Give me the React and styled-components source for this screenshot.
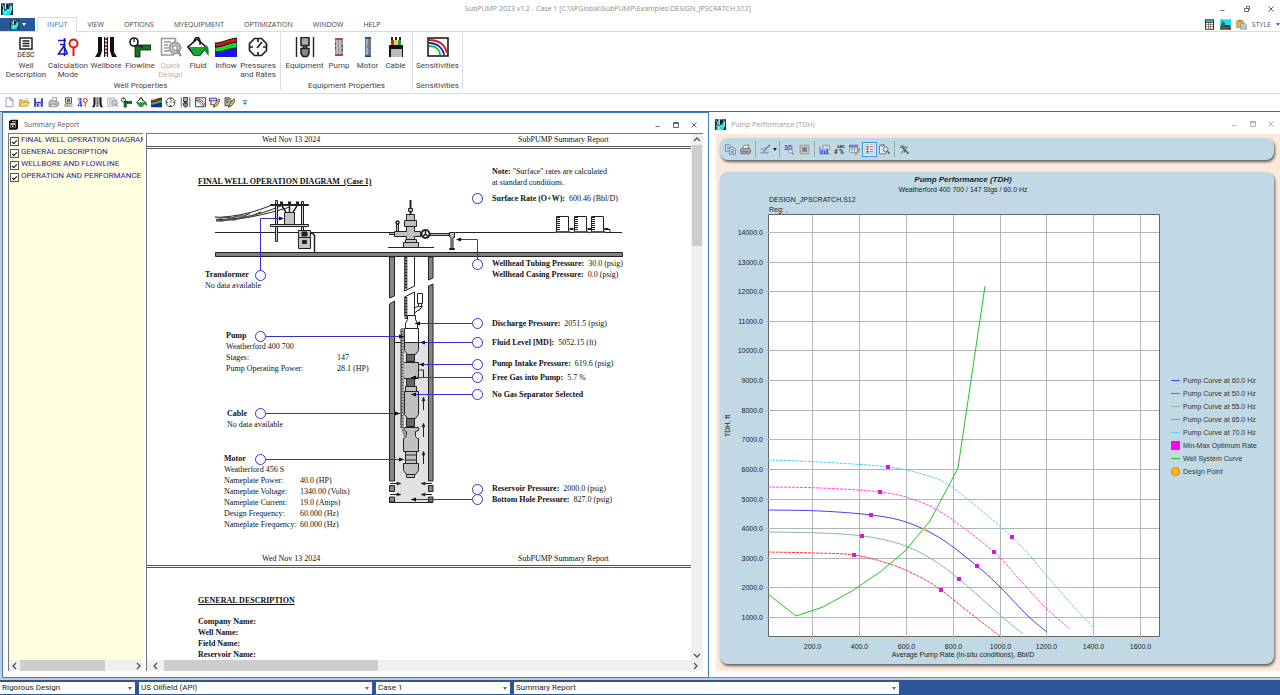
import React from "react";
import styled, { createGlobalStyle, css } from "styled-components";

const UI = `Roboto, "Noto Sans", sans-serif`;
const CAPTION = `"Open Sans", "Noto Sans", sans-serif`;
const SERIF = `"Liberation Serif", "Times New Roman", serif`;
const SANS = `"Liberation Sans", Arial, sans-serif`;
const BLUE = "#2b579a";

const GlobalStyle = createGlobalStyle`
  *, *::before, *::after { box-sizing: border-box; }
  body { margin: 0; font-family: ${UI}; font-size: 8px; line-height: 9px; color: #444; background: #fff; }
  button, input, select { font: inherit; color: inherit; margin: 0; }
  button { border: 0; padding: 0; background: none; cursor: pointer; }
  svg { display: block; }
  ul { list-style: none; margin: 0; padding: 0; }
`;

/* ---------- frame ---------- */

const Shell = styled.div`
  display: flex;
  flex-direction: column;
  height: 100vh;
  min-width: 960px;
  overflow: hidden;
`;

const AppTitle = styled.header`
  display: grid;
  grid-template-columns: 12px 1fr 72px;
  align-items: center;
  flex: none;
  height: 17px;
  padding: 0 5px 0 1px;
`;

const AppName = styled.h1`
  margin: 0;
  font-family: ${CAPTION};
  font-size: 7px;
  font-weight: 400;
  text-align: center;
  color: #8c8c8c;
`;

const Controls = styled.div`
  display: flex;
  align-items: center;
  justify-content: flex-end;
  gap: ${(p) => p.$gap}px;
  color: ${(p) => (p.$dim ? "#b0b0b0" : "#666")};
  button { width: 8px; height: 8px; }
`;

const Svg = styled.svg`
  width: ${(p) => p.$w}px;
  height: ${(p) => p.$h}px;
  flex: none;
`;

const TabRow = styled.nav`
  display: flex;
  flex: none;
  height: 15px;
  border-bottom: 1px solid #dcdcdc;
  background: #fff;
  font-family: ${CAPTION};
  font-size: 7px;
`;

const FileButton = styled.button`
  display: flex;
  align-items: center;
  justify-content: center;
  gap: 3px;
  width: 35px;
  margin: 1px 2px 0 0;
  background: ${BLUE};
`;

const Tab = styled.button`
  height: 15px;
  padding: 0 10px;
  color: #444;
  ${(p) =>
    p.$active &&
    css`
      border: 1px solid #dcdcdc;
      border-bottom-color: #fff;
      padding: 0 9px;
      background: #fff;
      color: #2a72c8;
    `}
`;

const TabTools = styled.div`
  display: flex;
  align-items: center;
  gap: 5px;
  margin-left: auto;
  color: #555;
  button { flex: none; }
`;

const Ribbon = styled.div`
  display: flex;
  flex: none;
  height: 62px;
  border-bottom: 1px solid #dcdcdc;
  padding-left: 1px;
`;

const Group = styled.section`
  display: flex;
  flex-direction: column;
  justify-content: space-between;
  margin: 1px 0 3px;
  padding: 4px ${(p) => p.$pad}px 0;
  border-right: 1px solid #dcdcdc;
`;

const GroupTools = styled.div`
  display: flex;
`;

const GroupName = styled.h2`
  margin: 0;
  font-size: 8px;
  font-weight: 400;
  text-align: center;
`;

const ToolButton = styled.button`
  display: flex;
  flex-direction: column;
  align-items: center;
  gap: 3px;
  width: ${(p) => p.$w}px;
  line-height: 9px;
  white-space: pre;
  color: ${(p) => (p.disabled ? "#b4b4b4" : "#444")};
`;

const QuickBar = styled.div`
  display: flex;
  align-items: center;
  flex: none;
  height: 17px;
  padding-left: 4px;
  gap: 6px;
`;

const QuickIcons = styled.div`
  display: flex;
  justify-content: space-between;
  width: 231px;
`;

const Desktop = styled.main`
  display: grid;
  grid-template-columns: minmax(0, 707fr) minmax(0, 571fr);
  flex: 1 1 0;
  min-height: 0;
  padding: 0 0 2px 2px;
  border-top: 1px solid #5f6368;
  background: #c9ccd0;
`;

const Window = styled.section`
  display: flex;
  flex-direction: column;
  min-height: 0;
  background: #fff;
  border: 1px solid #3d7cc4;
  ${(p) =>
    p.$inactive &&
    css`
      border: 0;
      border-bottom: 1px solid #8a8a8a;
    `}
`;

const WindowTitle = styled.header`
  display: flex;
  align-items: center;
  flex: none;
  height: ${(p) => (p.$dim ? 22 : 20)}px;
  padding: ${(p) => (p.$dim ? "2px 5px 0 6px" : "3px 10px 0 5px")};
  gap: 5px;
  color: ${(p) => (p.$dim ? "#9c9c9c" : "#555")};
  h2 { margin: 0; flex: 1; font-family: ${CAPTION}; font-size: 7px; font-weight: 400; }
`;

/* ---------- scroll bars ---------- */

const HBar = styled.div`
  display: flex;
  align-items: center;
  flex: none;
  height: 11px;
  background: #f0f0f0;
  button { display: flex; justify-content: center; width: ${(p) => p.$end}px; flex: none; }
`;

const HTrack = styled.div`
  flex: 1;
  height: 11px;
`;

const HThumb = styled.div`
  width: ${(p) => p.$size}%;
  height: 100%;
  background: #cdcdcd;
`;

const VBar = styled.div`
  display: flex;
  flex-direction: column;
  align-items: center;
  flex: none;
  width: 12px;
  background: #f0f0f0;
  button { display: flex; align-items: center; justify-content: center; height: 11px; flex: none; }
`;

const VTrack = styled.div`
  flex: 1;
  width: 10px;
`;

const VThumb = styled.div`
  height: 20%;
  background: #cdcdcd;
`;

/* ---------- summary report ---------- */

const ReportBody = styled.div`
  display: flex;
  flex: 1;
  min-height: 0;
  gap: 3px;
  margin: 0 5px 6px;
`;

const Outline = styled.aside`
  display: flex;
  flex-direction: column;
  justify-content: space-between;
  flex: none;
  width: 135px;
  border-top: 1px solid #777;
  border-left: 1px solid #777;
  background: #ffffdf;
  overflow: hidden;
`;

const OutlineItem = styled.label`
  display: flex;
  align-items: flex-start;
  gap: 2px;
  height: 12px;
  padding: 1px 0 0 1px;
  white-space: nowrap;
  color: #2a22b4;
`;

const Check = styled.input.attrs({ type: "checkbox" })`
  appearance: none;
  flex: none;
  width: 9px;
  height: 9px;
  margin-top: 2px;
  border: 1px solid #555;
  background: #fff;
  display: grid;
  place-items: center;
  &:checked::before {
    content: "";
    width: 5px;
    height: 3px;
    border-left: 1px solid #111;
    border-bottom: 1px solid #111;
    transform: rotate(-45deg);
  }
`;

const ReportPane = styled.div`
  display: flex;
  flex-direction: column;
  flex: 1;
  min-width: 0;
  border-top: 1px solid #777;
  border-left: 1px solid #777;
`;

const ReportView = styled.div`
  display: flex;
  flex: 1;
  min-height: 0;
`;

const Page = styled.article`
  flex: 1;
  min-width: 0;
  overflow: hidden;
  font-family: ${SERIF};
  line-height: 11px;
  color: #111;
`;

const PageRule = styled.div`
  display: grid;
  grid-template-columns: 256px 1fr;
  height: 15px;
  padding-left: 115px;
  line-height: 11px;
  border-bottom: 3px double #555;
`;

const PageTitle = styled.h3`
  margin: 0;
  font-size: 8px;
  font-weight: 700;
  text-decoration: underline;
  white-space: pre;
`;

const Canvas = styled.div`
  position: relative;
  width: 544px;
  height: 404px;
`;

const Note = styled.div`
  position: absolute;
  left: ${(p) => p.$x}px;
  top: ${(p) => p.$y}px;
  white-space: nowrap;
  span { margin-left: 4px; }
`;

const Specs = styled.table`
  border-collapse: collapse;
  th, td { padding: 0; font-weight: 400; text-align: left; line-height: 11px; }
  th { width: ${(p) => p.$label}px; }
`;

const General = styled.div`
  padding: 27px 51px;
  p { margin: 0; font-weight: 700; }
  h3 { margin-bottom: 10px; }
`;

/* ---------- pump performance ---------- */

const ChartBody = styled.div`
  display: flex;
  flex-direction: column;
  flex: 1;
  min-height: 0;
  gap: 12px;
  margin: 0 0 6px 7px;
  padding: 4px 6px 7px 4px;
  background: #fde9dc;
`;

const Card = styled.div`
  display: flex;
  align-items: ${(p) => (p.$bar ? "center" : "flex-start")};
  flex: ${(p) => (p.$bar ? "none" : "1")};
  min-height: 22px;
  padding-left: ${(p) => (p.$bar ? 3 : 0)}px;
  border-radius: 8px;
  background: #c1d9e5;
  box-shadow: 1px 2px 3px #5c5c5c;
`;

const CardTool = styled.button`
  display: flex;
  align-items: center;
  justify-content: center;
  width: 15px;
  height: 15px;
  ${(p) => p.$on && css`border: 1px solid #3a94e0; background: #d8ecfa;`}
`;

const Divider = styled.span`
  width: 1px;
  height: 16px;
  margin: 0 2px;
  background: #93a8b4;
`;

const Plot = styled.svg`
  flex: 1;
  min-width: 0;
  height: auto;
  max-height: 100%;
  font-family: ${SANS};
  font-size: 7px;
  fill: #222;
`;

const Legend = styled.ul`
  flex: none;
  width: 109px;
  margin-top: 202px;
  padding-left: 6px;
  font-family: ${SANS};
  font-size: 7px;
  color: #333;
  li { display: flex; align-items: center; gap: 2px; height: 13px; line-height: 13px; white-space: nowrap; }
`;

/* ---------- status bar ---------- */

const StatusBar = styled.footer`
  display: flex;
  align-items: center;
  flex: none;
  gap: 4px;
  height: 15px;
  background: ${BLUE};
`;

const Picker = styled.label`
  position: relative;
  flex: 0 1 ${(p) => p.$w}px;
  select {
    appearance: none;
    display: block;
    width: 100%;
    height: 12px;
    padding: 0 12px 0 2px;
    border: 0;
    border-radius: 0;
    background: #fff;
    color: #222;
  }
  svg { position: absolute; right: 3px; top: 5px; pointer-events: none; }
`;

/* ---------- icons ---------- */

const I = {
  app: (
    <g>
      <path d="M0 0h22v22H0z" fill="#062a2c" />
      <path d="M3 22V12l4 3V0h3v9l4 3 2-8 3 2v10l-3 6z" fill="#16e4ec" />
      <path d="M2 2l3 5-1 8M17 2l3 4-2 9M8 0v20M13 0v14" stroke="#fff" strokeWidth="1.6" fill="none" />
      <path d="M10 2h4v9h-4z" fill="#111" />
      <path d="M5 10l3 3 2-3" stroke="#0a7a50" strokeWidth="2" fill="none" />
    </g>
  ),
  desc: (
    <g>
      <path d="M5 1h12v11H5zM7.500 4h7M7.500 6.500h7M7.500 9h7" fill="none" stroke="#222" strokeWidth="1.500" />
      <text x="11" y="20" textAnchor="middle" fontFamily="Roboto, sans-serif" fontSize="7" fill="#222">DESC</text>
    </g>
  ),
  calc: (
    <g fill="none" strokeWidth="1.600">
      <path d="M1 3.500h8M7.500 1v18M8 7.500L1.500 17h9M3 7.500h4M7.500 10l3 7" stroke="#1418cc" />
      <circle cx="16.500" cy="6.500" r="4" stroke="#e01818" strokeWidth="2" />
      <path d="M16.500 10.500V19" stroke="#e01818" strokeWidth="2" />
    </g>
  ),
  wellbore: (
    <g>
      <path d="M3 0h4v14l-2 6H0l3-5zM19 0h-4v14l2 6h5l-3-5z" fill="#111" />
      <path d="M9.500 0v20M12.500 0v20" stroke="#111" strokeWidth="1" />
      <path d="M11 1v18" stroke="#c02020" strokeWidth="2" strokeDasharray="2 1.500" />
    </g>
  ),
  flow: (
    <g>
      <path d="M6 8h16v5H11v7H6z" fill="#0a7a1c" stroke="#111" strokeWidth=".8" />
      <circle cx="5" cy="5" r="4" fill="#fff" stroke="#111" strokeWidth="1.600" />
      <path d="M5 5V2M8 9h5v2" stroke="#111" strokeWidth="1.200" fill="none" />
    </g>
  ),
  quick: (
    <g fill="none" stroke="#999" strokeWidth="1.500">
      <path d="M14 18H1.500V1.500h14V5M4 5h7M4 8h4M4 11h4M4 14h5" />
      <circle cx="15" cy="11" r="5.500" fill="#d8d8d8" strokeWidth="2" />
      <circle cx="15" cy="11" r="2.500" fill="#fff" />
      <path d="M17 13l4 6" strokeWidth="2.500" />
    </g>
  ),
  fluid: (
    <g>
      <path d="M10 2l9 8-6 8H7l-6-8z" fill="#fff" stroke="#111" strokeWidth="1.600" />
      <path d="M2 10h17l-6 8H7z" fill="#18a832" />
      <path d="M18 8c4 1 4 5 3.500 11L17 13z" fill="#0c8a22" />
      <path d="M7 5c0-6 6-6 6 0v3" fill="none" stroke="#111" strokeWidth="1.400" />
    </g>
  ),
  inflow: (
    <g>
      <path d="M0 15c8 0 12-4 22-4v9H0z" fill="#1818e0" />
      <path d="M0 10c8 0 12-4 22-5v6c-9 0-13 4-22 4z" fill="#14d82c" stroke="#111" strokeWidth=".8" />
      <path d="M0 6c8 0 12-4 22-5v4C12 6 8 10 0 10z" fill="#d81818" stroke="#111" strokeWidth="1" />
    </g>
  ),
  gauge: (
    <g fill="none" stroke="#222" strokeWidth="1.700">
      <path d="M7.500 1.500h7l5 5v7l-5 5h-7l-5-5v-7z" />
      <path d="M11 2v3M11 15v3M3 10h3M16 10h3M10 11l5-6" />
    </g>
  ),
  equip: (
    <g stroke="#222">
      <path d="M2.500 0v20M19.500 0v20" strokeWidth="1.400" />
      <path d="M7 .5h8v8H7z" fill="#aaa" strokeWidth="1.600" />
      <path d="M9 8.500h4v3H9z" fill="#555" />
      <path d="M7 11.500h8v5l-2 3H9l-2-3z" fill="#888" strokeWidth="1.600" />
    </g>
  ),
  pump: (
    <g>
      <path d="M7 1h8v18H7z" fill="#999" />
      <path d="M9 3v14M12 3v14" stroke="#ddd" />
      <path d="M7 1h8v2H7zM7 17h8v2H7z" fill="#a05050" />
      <path d="M7 7h1M7 11h1M14 9h1M14 13h1" stroke="#444" strokeWidth="2" />
    </g>
  ),
  motor: (
    <g>
      <path d="M8 0h6v20H8z" fill="#4a83b8" />
      <path d="M10 2v16" stroke="#9cc6e8" strokeWidth="1.500" />
      <path d="M12 3v3M11 8v3M12 13v3" stroke="#c86a1e" strokeWidth="2" />
      <path d="M8 0h6v1.500H8zM8 18.500h6V20H8z" fill="#2c4258" />
    </g>
  ),
  cable: (
    <g>
      <path d="M6 0h2v4H6zM10 0h2v4h-2zM14 0h2v4h-2z" fill="#222" />
      <path d="M6 3h3v6H6z" fill="#d82020" />
      <path d="M9.500 3h3v6h-3z" fill="#e8c820" />
      <path d="M13 3h3v6h-3z" fill="#20a040" />
      <path d="M4 8h14v12H4z" fill="#111" />
      <path d="M6 12h11v8H6z" fill="#bbb" />
    </g>
  ),
  sens: (
    <g fill="none" strokeWidth="1.800">
      <path d="M1 1h20v18H1z" stroke="#111" fill="#fff" strokeWidth="1.500" />
      <path d="M2 3c10 0 16 5 18 13" stroke="#e01818" />
      <path d="M2 6c8 0 14 5 15 12" stroke="#1818e0" />
      <path d="M2 9c7 0 11 4 11 9" stroke="#18c828" />
    </g>
  ),
  fresh: <path d="M4 1h9l5 5v13H4zM13 1v5h5" fill="#fff" stroke="#7488a8" strokeWidth="1.600" />,
  open: (
    <g stroke="#a87c18" strokeWidth="1.200">
      <path d="M1 18V5h6l2 2h8v3" fill="#f4d060" />
      <path d="M1 18l4-8h16l-4 8z" fill="#f8d870" />
      <path d="M13 3c3-2 5 0 6 2" fill="none" stroke="#4870b0" />
    </g>
  ),
  save: (
    <g>
      <path d="M2 2h18v17H2z" fill="#4a50b8" />
      <path d="M6 2h10v7H6z" fill="#fff" />
      <path d="M6 12h10v7H6z" fill="#c8cce8" />
      <path d="M8 13h3v5H8z" fill="#333a80" />
    </g>
  ),
  print: (
    <g stroke="#666" strokeWidth="1.200">
      <path d="M6 8l3-7h9l-2 7" fill="#fff" />
      <path d="M2 9l3-2h13l3 3v6l-4 2H2z" fill="#c4c4bc" />
      <path d="M5 14h11v5H5z" fill="#eee" />
      <path d="M15 12h4" stroke="#d8a020" strokeWidth="2" />
    </g>
  ),
  edit: (
    <g>
      <path d="M1 2h14v5H1z" fill="#eee" stroke="#2222a8" strokeWidth="1.800" />
      <path d="M4 7v8h7" fill="none" stroke="#c02020" strokeWidth="2.400" />
      <path d="M20 3L11 14l-2 6 6-3 7-10z" fill="#f0d020" stroke="#222" strokeWidth="1.500" />
    </g>
  ),
  edit2: (
    <g>
      <path d="M2 1h9l3 4v12H2z" fill="#bbb" stroke="#222" strokeWidth="1.500" />
      <path d="M4 5h6M4 8h7M4 11h5" stroke="#222" />
      <path d="M20 3L11 14l-2 6 6-3 7-10z" fill="#f0d020" stroke="#222" strokeWidth="1.500" />
    </g>
  ),
  more: <path d="M5 3h12v3H5zM5 9h12l-6 7z" fill="#2a72c8" />,
  report: (
    <g>
      <path d="M2 4l4-3h14v17l-3 3H2z" fill="#111" />
      <path d="M5 8h10v9H5z" fill="#fff" />
      <path d="M6 11h8v6H6z" fill="#111" />
      <path d="M8 12.500h3v3H8z" fill="#fff" />
      <path d="M8 4h8v2H8z" fill="#ccc" />
    </g>
  ),
  keypad: (
    <g>
      <path d="M2 0h18v21H2z" fill="#333" />
      <path d="M4 2h14v3H4z" fill="#30d8d8" />
      <path d="M4 7h4v3H4zM9 7h4v3H9zM14 7h4v3h-4zM4 11h4v3H4zM9 11h4v3H9zM14 11h4v3h-4zM4 15h4v4H4zM9 15h4v4H9zM14 15h4v4h-4z" fill="#fff" />
    </g>
  ),
  field: (
    <g>
      <path d="M0 0h22v21H0z" fill="#18e0e8" />
      <path d="M0 15h22v6H0z" fill="#287838" />
      <path d="M4 4h3v3h3v12H2V9h2z" fill="#555" />
      <path d="M10 12h10v3H10z" fill="#111" />
      <path d="M13 17h9v3h-9z" fill="#a02828" />
    </g>
  ),
  paste: (
    <g>
      <path d="M1 3h14v14H1z" fill="#e0b838" stroke="#a08020" />
      <path d="M5 1h6v4H5z" fill="#888" />
      <path d="M9 8h9l3 3v9H9z" fill="#b8c4dc" stroke="#68788c" />
    </g>
  ),
  copy: (
    <g fill="#cfdcf0" stroke="#5a68a0" strokeWidth="1.400">
      <path d="M1 1h8l3 3v10H1z" />
      <path d="M9 6h8l4 4v10H9zM12 11h6M12 14h6M12 17h6M4 6h4M4 9h4" />
    </g>
  ),
  printer: (
    <g stroke="#555" strokeWidth="1.400">
      <path d="M5 9l3-7h10l-3 7" fill="#fff" />
      <path d="M1 11l4-3h14l2 3v6l-3 2H2z" fill="#aaa" />
      <path d="M4 15h13" />
    </g>
  ),
  brush: (
    <g fill="none">
      <path d="M20 1L10 11l-3 3" stroke="#777" strokeWidth="2.500" />
      <path d="M1 10c4 0 5-2 8-2" stroke="#4a7ad0" strokeWidth="1.500" />
      <path d="M1 18h16" stroke="#e04040" strokeWidth="2" strokeDasharray="2 2" />
      <path d="M3 16h16" stroke="#4040e0" strokeWidth="2" strokeDasharray="2 2" />
    </g>
  ),
  threeD: (
    <g>
      <text x="0" y="11" fontFamily="Roboto, sans-serif" fontSize="14" fontWeight="700" fill="#3c50e0">3D</text>
      <circle cx="13" cy="14" r="4" stroke="#6a7c98" strokeWidth="1.500" fill="#dceaf4" />
      <path d="M16 17l4 4" stroke="#c07070" strokeWidth="2.500" />
    </g>
  ),
  grid: (
    <g stroke="#8a8a8a" strokeWidth="1.500">
      <path d="M2 2h18v17H2z" fill="#ccc" />
      <path d="M7 2v17M15 2v17M2 7h18M2 14h18" strokeDasharray="2 1" />
      <path d="M8 7h7v7H8z" fill="#777" />
    </g>
  ),
  bars: (
    <g>
      <path d="M8 2h13v9H8z" fill="#eef" stroke="#667" strokeWidth="1.300" />
      <path d="M11 5h7M11 8h7" stroke="#778" />
      <path d="M2 5v14h19" stroke="#2c34c8" strokeWidth="1.500" fill="none" />
      <path d="M5 11h3v8H5zM10 13h3v6h-3zM15 10h3v9h-3z" fill="#3c48e0" />
    </g>
  ),
  abc: (
    <g fontFamily="Roboto, sans-serif" fontWeight="700" fill="#333">
      <text x="6" y="8" fontSize="8">ABC</text>
      <text x="0" y="19" fontSize="13">#</text>
      <text x="10" y="20" fontSize="13">%</text>
    </g>
  ),
  table: (
    <g stroke="#6470a8" strokeWidth="1.300">
      <path d="M1 2h16v14H1z" fill="#fff" />
      <path d="M1 2h16v4H1z" fill="#6c80d8" />
      <path d="M6 6v10M11 6v10M1 10h16" />
      <path d="M21 8l-7 9-2 3 4-1 6-8z" fill="#e8c040" stroke="#775" />
    </g>
  ),
  list: (
    <g>
      <path d="M2 1h18v18H2z" fill="#fff" stroke="#888" />
      <path d="M5 3h4v4H5z" fill="#e03030" />
      <path d="M5 8h4v4H5z" fill="#30a030" />
      <path d="M5 13h4v4H5z" fill="#3030d0" />
      <path d="M11 5h7M11 10h7M11 15h7" stroke="#333" strokeWidth="1.500" />
    </g>
  ),
  find: (
    <g fill="none" stroke="#555" strokeWidth="1.400">
      <path d="M1 3h9l4 4v12H1zM3 1h9" fill="#e4ecf4" />
      <circle cx="13" cy="10" r="5" fill="#cfe4f0" />
      <path d="M17 14l4 5" strokeWidth="2.600" />
    </g>
  ),
  tools: (
    <g fill="none" stroke="#555" strokeWidth="1.800">
      <path d="M7 6l12 13" strokeWidth="3" />
      <path d="M3 2l4 4M8 1v5H2M4 18l7-8M13 3l-2 5M18 6l-5 2M12 12l-2 5" />
    </g>
  ),
};

const Icon = ({ name, size = 11 }) => (
  <Svg $w={size} $h={size === 22 ? 21 : size} viewBox="0 0 22 21" aria-hidden="true">
    {I[name]}
  </Svg>
);

const Arrow = ({ d }) => {
  const paths = { left: "M5 1L2 4l3 3", right: "M3 1l3 3-3 3", up: "M1 5l3-3 3 3", down: "M1 3l3 3 3-3" };
  return (
    <Svg $w={8} $h={8} viewBox="0 0 8 8" aria-hidden="true">
      <path d={paths[d]} fill="none" stroke="#555" strokeWidth="1.4" />
    </Svg>
  );
};

const Caret = ({ fill = "#666" }) => (
  <Svg $w={4} $h={3} viewBox="0 0 4 3" aria-hidden="true">
    <path d="M0 0h4L2 3z" fill={fill} />
  </Svg>
);

const glyphs = {
  minimize: "M1.500 5.500h4",
  maximize: "M1.500 1.500h5v5h-5zM1.500 2.500h5",
  restore: "M1.500 3.500h4v3h-4zM3.500 3V1.500h3v3h-1",
  close: "M1.500 1.500l5 5M6.500 1.500l-5 5",
};

const WindowControls = ({ gap, dim, middle = "maximize" }) => (
  <Controls $gap={gap} $dim={dim}>
    {["minimize", middle, "close"].map((g) => (
      <button key={g} aria-label={g}>
        <Svg $w={8} $h={8} viewBox="0 0 8 8">
          <path d={glyphs[g]} fill="none" stroke="currentColor" strokeWidth="1" />
        </Svg>
      </button>
    ))}
  </Controls>
);

/* ---------- data ---------- */

const tabs = ["INPUT", "VIEW", "OPTIONS", "MYEQUIPMENT", "OPTIMIZATION", "WINDOW", "HELP"];

const groups = [
  {
    name: "Well Properties",
    pad: 4,
    tools: [
      ["desc", "Well\nDescription", 42],
      ["calc", "Calculation\nMode", 42],
      ["wellbore", "Wellbore", 34],
      ["flow", "Flowline", 34],
      ["quick", "Quick\nDesign", 27, true],
      ["fluid", "Fluid", 28],
      ["inflow", "Inflow", 28],
      ["gauge", "Pressures\nand Rates", 36],
    ],
  },
  {
    name: "Equipment Properties",
    pad: 3,
    tools: [
      ["equip", "Equipment", 41],
      ["pump", "Pump", 28],
      ["motor", "Motor", 29],
      ["cable", "Cable", 27],
    ],
  },
  { name: "Sensitivities", pad: 3, tools: [["sens", "Sensitivities", 43]] },
];

const quick = ["fresh", "open", "save", "print", "desc", "calc", "wellbore", "quick", "flow", "fluid", "inflow", "gauge", "equip", "sens", "edit", "edit2"];

const sections = ["FINAL WELL OPERATION DIAGRAM", "GENERAL DESCRIPTION", "WELLBORE AND FLOWLINE", "OPERATION AND PERFORMANCE"];

const readings = [
  [44, "Surface Rate (O+W):", "600.46 (Bbl/D)"],
  [109, "Wellhead Tubing Pressure:", "30.0 (psig)"],
  [120, "Wellhead Casing Pressure:", "0.0 (psig)"],
  [169, "Discharge Pressure:", "2051.5 (psig)"],
  [188, "Fluid Level [MD]:", "5052.15 (ft)"],
  [209, "Pump Intake Pressure:", "619.6 (psig)"],
  [223, "Free Gas into Pump:", "5.7 %"],
  [240, "No Gas Separator Selected", ""],
  [334, "Reservoir Pressure:", "2000.0 (psig)"],
  [345, "Bottom Hole Pressure:", "827.0 (psig)"],
];

const motorSpecs = [
  ["Nameplate Power:", "40.0 (HP)"],
  ["Nameplate Voltage:", "1340.00 (Volts)"],
  ["Nameplate Current:", "19.0 (Amps)"],
  ["Design Frequency:", "60.000 (Hz)"],
  ["Nameplate Frequency:", "60.000 (Hz)"],
];

/* ---------- well diagram ---------- */

const rings = [
  [260, 275], [260, 336], [260, 413], [260, 459],
  [477, 198], [477, 264], [477, 323], [477, 342], [477, 364], [477, 377], [477, 394], [477, 489], [477, 499],
];
const leaders = [
  [472, 323, 415], [472, 342, 420], [472, 364, 419], [472, 377, 411], [472, 394, 411], [472, 499, 411],
  [266, 336, 404], [266, 413, 400], [266, 459, 404],
];

const Tank = ({ x }) => (
  <g>
    <path d={`M${x} 216.5h12v15h-12z`} fill="#fff" />
    <path d={`M${x + 2} 217v14`} strokeWidth="3" strokeDasharray="1 1" />
    <path d={`M${x - 1} 232h15`} strokeWidth="2" stroke="#555" />
    <path d={`M${x + 13} 229h4`} strokeWidth="2" />
  </g>
);

const WellDiagram = () => (
  <svg width="544" height="404" viewBox="147 149 544 404" role="img" aria-label="Well operation diagram">
    <g stroke="#222" strokeWidth="1" fill="none">
      <path d="M216 217.500c22-1 38-5 57-13M216 219.500c20 0 40-3 66-14M216 221c24-1 48-6 74-14" />
      <path d="M215 217l6 1 5-1 6 1 6-2 6 0 6-3M216 220l6 1 6-2 6 1 6-2 7-1 7-2 7-3" strokeWidth="1.500" stroke="#555" />
      <path d="M215 232.500h83M311 232.500h79M455 232.500h167" />
      <path d="M275.500 200.500h2v41h-2zM301.500 201.500h2v30h-2z" fill="#ccc" />
      <path d="M270.500 204.500h38v1h-38zM270.500 224.500h38v2h-38z" fill="#ccc" />
      <path d="M284.500 212.500h10v12h-10z" fill="#c4c4c4" />
      <path d="M282 206l4 6M289.500 206v6M297 206l-4 6" strokeWidth="1.500" />
      <path d="M280 203h3M288 203h3M296 203h3" strokeWidth="3" />
      <path d="M298.500 230.500h12v7h-12zM298.500 237.500h12v11h-12z" fill="#c4c4c4" />
      <path d="M302 232h5v4h-5zM302.500 240.500h4v3h-4z" fill="#222" />
      <path d="M311 233.500h2l1.500 2V252" strokeWidth="1.500" />
      <path d="M215.500 252.500h407v4h-407z" fill="#808080" />

      <path d="M394.500 343h34v159h-34z" fill="#e2e2e2" stroke="none" />
      <path d="M394 342.500h34" />
      <g fill="#858585">
        <path d="M389.500 257v41l5-2v-39zM389.500 304l5-3v180h-5zM428.500 257v23l4.500-2v-21zM428.500 286l4.500-2v197h-4.500z" />
        <path d="M389.500 485.500h5v6h-5zM428.500 485.500h4.500v6h-4.500zM389.500 497h5v5h-5zM428.500 497h4.500v5h-4.500z" />
      </g>
      <path d="M389 502.500h44" />

      <path d="M404.500 257v34l10-5v-29M404.500 316v-19l10-5v24" fill="#fff" />
      <path d="M406 257v32M406 297v22" strokeWidth="3" stroke="#777" />
      <path d="M406 257v32M406 297v22" strokeWidth="2" strokeDasharray="1 2" />
      <path d="M417.500 293.500h5v10h-5zM418.500 303.500h3v3h-3zM414.500 308l4-2M414.500 313l8-6M422.500 306l-4 5" fill="#fff" />

      <path d="M407.500 315.500h8v4l2 4v5h-12v-5l2-4z" fill="#fff" />
      <path d="M404.500 328.500h14v14h-14z" fill="#fff" />
      <g fill="#c0c0c0">
        <path d="M404.500 342.500h14v8l-3 4h-8l-3-4z" />
        <path d="M403.500 362.500h15v16h-15z" />
        <path d="M405.500 386.500h11v5h-11zM404.500 391.500h14v23l-3 4h-8l-3-4z" />
        <path d="M404.500 427.500h14v3l-3 1v5l2 2h1v13h-15v-13l3-2v-5l-2-1z" />
        <path d="M405.500 451.500h11v12h-11zM405.500 455h11M405.500 460h11M403.500 463.500h15v7l-3 4h-9l-3-4zM406.500 474.500h8v3h-8z" />
      </g>
      <path d="M406.500 354.500h8v7h-8zM406.500 378.500h8v8h-8zM406.500 418.500h8v8h-8z" fill="#666" />
      <path d="M402.500 328v100l3 9" strokeWidth="3" stroke="#aaa" />
      <path d="M402.500 328v100l3 9" strokeWidth="2" strokeDasharray="1 2" stroke="#555" />
      <path d="M401 329v99" />

      <path d="M423.500 410v-12M423.500 437v-13M423.500 464v-12M423.500 378v-8h-4" />
      <path d="M390 483.500h9M432 483.500h-9M390 494.500h9M432 494.500h-9" />
      <path d="M422 401l1.500-4 1.500 4zM422 427l1.500-4 1.500 4zM422 455l1.500-4 1.500 4zM397 482l4 1.500-4 1.500zM397 493l4 1.500-4 1.500zM425 482l-4 1.500 4 1.500zM425 493l-4 1.500 4 1.500z" fill="#222" strokeWidth=".5" />

      <path d="M388 247.500h46" />
      <path d="M410.500 200v14" strokeWidth="2" />
      <g fill="#c0c0c0">
        <path d="M408.500 208.500h4v3h-4zM406.500 214.500h8v6h-8zM404.500 220.500h12v6h-12z" />
        <path d="M389.500 232.500h5v2h-5zM394.500 231.500h12v-5h8v5h6v5h-6v3h-8v-3h-12z" />
        <path d="M405.500 239.500h11v3h-11zM403.500 242.500h15v5h-15z" />
        <path d="M396.500 224.500h2v7h-2z" />
        <path d="M430 233.500h19v2h-19zM449.500 232.500h5v5h-1.500v11h-2v-11l-1.500-1zM449.500 248.500h5v1h-5z" />
      </g>
      <circle cx="397.500" cy="222.500" r="1.500" strokeWidth="1.500" />
      <circle cx="425.500" cy="234" r="4" fill="#fff" strokeWidth="2" />
      <path d="M425.500 230v4l-3 3M425.500 234l3 3" strokeWidth="1.500" />
      <Tank x={556.5} />
      <Tank x={574.5} />
      <Tank x={591.5} />
      <path d="M604 229.500h6v3" />
    </g>
    <g stroke="#3430d0" fill="none">
      <path d="M260.500 270v-51.500H280M477.500 259v-19.500H459" />
      {leaders.map(([from, y, to]) => (
        <path key={y} d={`M${from} ${y}.5H${to}`} />
      ))}
      {rings.map(([x, y]) => (
        <circle key={`${x}-${y}`} cx={x + 0.5} cy={y + 0.5} r="5" fill="#fff" />
      ))}
    </g>
    <g fill="#111">
      {leaders.map(([from, y, to]) => {
        const s = from > to ? 5 : -5;
        return <path key={y} d={`M${to} ${y}.5l${s}-2v4z`} />;
      })}
      <path d="M284 218.500l-5-2v4zM456 239.500l5-2v4z" />
    </g>
  </svg>
);

/* ---------- performance chart ---------- */

const series = [
  { name: "Pump Curve at 60.0 Hz", color: "#4a3cf0", pts: [[768, 510], [820, 511], [871, 515], [906, 522], [940, 538], [977, 566], [1000, 587], [1028, 616], [1047, 632]] },
  { name: "Pump Curve at 50.0 Hz", color: "#ff3434", key: "#d84a4a", dash: "3 1", pts: [[768, 552], [815, 553], [854, 555], [890, 564], [920, 577], [941, 590], [975, 617], [1000, 636]] },
  { name: "Pump Curve at 55.0 Hz", color: "#86b8a0", pts: [[768, 532], [820, 533], [863, 536], [900, 544], [930, 558], [959, 579], [1000, 615], [1023, 634]] },
  { name: "Pump Curve at 65.0 Hz", color: "#ff4ae8", dash: "3 1", pts: [[768, 487], [820, 488], [880, 492], [915, 500], [947, 516], [994, 552], [1020, 580], [1047, 609], [1070, 629]] },
  { name: "Pump Curve at 70.0 Hz", color: "#5ccbf8", dash: "3 1", pts: [[768, 460], [820, 462], [888, 467], [925, 475], [953, 488], [1012, 537], [1047, 576], [1074, 607], [1093, 627]] },
];
const wellCurve = "768,594 796,616 823,607 852,591 880,572 905,551 930,521 958,468 985,286";
const marks = [[888, 467], [880, 492], [871, 515], [862, 536], [854, 555], [1012, 537], [994, 552], [977, 566], [959, 579], [941, 590]];

const smooth = (p) =>
  p.slice(1).reduce((d, b, i) => {
    const a = p[i];
    const z = p[i - 1] || a;
    const c = p[i + 2] || b;
    return `${d}C${a[0] + (b[0] - z[0]) / 6} ${a[1] + (b[1] - z[1]) / 6} ${b[0] - (c[0] - a[0]) / 6} ${b[1] - (c[1] - a[1]) / 6} ${b[0]} ${b[1]}`;
  }, `M${p[0][0]} ${p[0][1]}`);

const xTicks = [200, 400, 600, 800, 1000, 1200, 1400, 1600].map((v) => [v, Math.floor(766 + v * 0.2341) + 0.5]);
const yTicks = Array.from({ length: 14 }, (_, i) => [(i + 1) * 1000, Math.round(617 - i * 29.62) + 0.5]);

const PumpChart = () => (
  <Plot viewBox="720 172 445 492" role="img" aria-label="Pump performance chart">
    <text x="963" y="182" textAnchor="middle" fontSize="8" fontWeight="700" fontStyle="italic">Pump Performance (TDH)</text>
    <text x="963" y="192" textAnchor="middle">Weatherford 400 700 / 147 Stgs / 60.0 Hz</text>
    <text x="769" y="202">DESIGN_JPSCRATCH.S12</text>
    <text x="769" y="212">Reg: ,</text>
    <path d="M768.500 214.500h391v422h-391z" fill="#fff" stroke="#666" />
    <g stroke="#b0b5b9">
      {xTicks.map(([v, x]) => <path key={v} d={`M${x} 215V639`} />)}
      {yTicks.map(([v, y]) => <path key={v} d={`M766 ${y}H1159`} />)}
    </g>
    {xTicks.map(([v, x]) => <text key={v} x={x} y="649" textAnchor="middle">{v.toFixed(1)}</text>)}
    {yTicks.map(([v, y]) => <text key={v} x="763" y={y + 2.5} textAnchor="end">{v.toFixed(1)}</text>)}
    <text x="963" y="657" textAnchor="middle">Average Pump Rate (in-situ conditions), Bbl/D</text>
    <text transform="translate(730 426) rotate(-90)" textAnchor="middle">TDH, ft</text>
    <g fill="none">
      {series.map((s) => <path key={s.name} d={smooth(s.pts)} stroke={s.color} strokeDasharray={s.dash} />)}
      <polyline points={wellCurve} stroke="#22c422" />
    </g>
    <circle cx="924" cy="529" r="1.500" fill="#ffb800" />
    {marks.map(([x, y]) => <rect key={`${x}-${y}`} x={x - 2} y={y - 2} width="4" height="4" fill="#d818d8" />)}
  </Plot>
);

const Key = ({ color, shape }) => (
  <Svg $w={10} $h={11} viewBox="0 0 10 11" aria-hidden="true">
    {shape === "box" && <path d="M0 1h9v9H0z" fill={color} />}
    {shape === "dot" && <circle cx="4.500" cy="5.500" r="4" fill={color} stroke="#b88a10" />}
    {!shape && <path d="M0 5h9v1H0z" fill={color} />}
  </Svg>
);

/* ---------- parts ---------- */

const HScroll = ({ size, end }) => (
  <HBar $end={end}>
    <button aria-label="scroll left"><Arrow d="left" /></button>
    <HTrack><HThumb $size={size} /></HTrack>
    <button aria-label="scroll right"><Arrow d="right" /></button>
  </HBar>
);

const RunningHead = () => (
  <PageRule>
    <span>Wed Nov 13 2024</span>
    <span>SubPUMP Summary Report</span>
  </PageRule>
);

const SummaryReport = () => (
  <Window>
    <WindowTitle>
      <Icon name="report" />
      <h2>Summary Report</h2>
      <WindowControls gap={10} />
    </WindowTitle>
    <ReportBody>
      <Outline>
        <div>
          {sections.map((s) => (
            <OutlineItem key={s}>
              <Check defaultChecked />
              {s}
            </OutlineItem>
          ))}
        </div>
        <HScroll size={76} end={11} />
      </Outline>
      <ReportPane>
        <ReportView>
          <Page>
            <RunningHead />
            <Canvas>
              <WellDiagram />
              <Note $x={51} $y={27}>
                <PageTitle>{"FINAL WELL OPERATION DIAGRAM  (Case 1)"}</PageTitle>
              </Note>
              <Note $x={345} $y={17}><b>Note:</b> "Surface" rates are calculated<br />at standard conditions.</Note>
              {readings.map(([y, name, value]) => (
                <Note key={name} $x={345} $y={y}><b>{name}</b><span>{value}</span></Note>
              ))}
              <Note $x={58} $y={120}><b>Transformer</b><br />No data available</Note>
              <Note $x={79} $y={181}>
                <b>Pump</b><br />Weatherford 400 700
                <Specs $label={111}>
                  <tbody>
                    <tr><th>Stages:</th><td>147</td></tr>
                    <tr><th>Pump Operating Power:</th><td>28.1 (HP)</td></tr>
                  </tbody>
                </Specs>
              </Note>
              <Note $x={80} $y={259}><b>Cable</b><br />No data available</Note>
              <Note $x={77} $y={304}>
                <b>Motor</b><br />Weatherford 456 S
                <Specs $label={76}>
                  <tbody>
                    {motorSpecs.map(([k, v]) => <tr key={k}><th>{k}</th><td>{v}</td></tr>)}
                  </tbody>
                </Specs>
              </Note>
            </Canvas>
            <RunningHead />
            <General>
              <PageTitle>GENERAL DESCRIPTION</PageTitle>
              <p>Company Name:</p>
              <p>Well Name:</p>
              <p>Field Name:</p>
              <p>Reservoir Name:</p>
            </General>
          </Page>
          <VBar>
            <button aria-label="scroll up"><Arrow d="up" /></button>
            <VTrack><VThumb /></VTrack>
            <button aria-label="scroll down"><Arrow d="down" /></button>
          </VBar>
        </ReportView>
        <HScroll size={41} end={17} />
      </ReportPane>
    </ReportBody>
  </Window>
);

const PumpPerformance = () => (
  <Window $inactive>
    <WindowTitle $dim>
      <Icon name="app" />
      <h2>Pump Performance (TDH)</h2>
      <WindowControls gap={10} dim />
    </WindowTitle>
    <ChartBody>
      <Card $bar role="toolbar">
        <CardTool aria-label="copy"><Icon name="copy" /></CardTool>
        <CardTool aria-label="print"><Icon name="printer" /></CardTool>
        <Divider />
        <CardTool aria-label="palette"><Icon name="brush" /></CardTool>
        <Caret fill="#222" />
        <Divider />
        <CardTool aria-label="3D"><Icon name="threeD" /></CardTool>
        <CardTool aria-label="rotate"><Icon name="grid" /></CardTool>
        <Divider />
        <CardTool aria-label="chart type"><Icon name="bars" /></CardTool>
        <CardTool aria-label="labels"><Icon name="abc" /></CardTool>
        <CardTool aria-label="data editor"><Icon name="table" /></CardTool>
        <CardTool $on aria-label="legend"><Icon name="list" /></CardTool>
        <CardTool aria-label="zoom"><Icon name="find" /></CardTool>
        <Divider />
        <CardTool aria-label="properties"><Icon name="tools" /></CardTool>
      </Card>
      <Card>
        <PumpChart />
        <Legend>
          {series.map((s) => <li key={s.name}><Key color={s.key || s.color} />{s.name}</li>)}
          <li><Key color="#ff00f0" shape="box" />Min-Max Optimum Rate</li>
          <li><Key color="#22c422" />Well System Curve</li>
          <li><Key color="#ffb800" shape="dot" />Design Point</li>
        </Legend>
      </Card>
    </ChartBody>
  </Window>
);

export default function App() {
  return (
    <>
      <GlobalStyle />
      <Shell>
        <AppTitle>
          <Icon name="app" size={12} />
          <AppName>SubPUMP 2023 v1.2 - Case 1 [C:\SPGlobal\SubPUMP\Examples\DESIGN_JPSCRATCH.S12]</AppName>
          <WindowControls gap={16} middle="restore" />
        </AppTitle>
        <TabRow>
          <FileButton aria-label="File">
            <Icon name="app" size={9} />
            <Caret fill="#fff" />
          </FileButton>
          {tabs.map((t, i) => <Tab key={t} $active={i === 0}>{t}</Tab>)}
          <TabTools>
            <button aria-label="calculator"><Icon name="keypad" /></button>
            <button aria-label="field"><Icon name="field" /></button>
            <button aria-label="paste"><Icon name="paste" /></button>
            <button>STYLE</button>
            <Caret fill="#2a72c8" />
          </TabTools>
        </TabRow>
        <Ribbon>
          {groups.map((g) => (
            <Group key={g.name} $pad={g.pad}>
              <GroupTools>
                {g.tools.map(([icon, label, w, off]) => (
                  <ToolButton key={label} $w={w} disabled={off}>
                    <Icon name={icon} size={22} />
                    {label}
                  </ToolButton>
                ))}
              </GroupTools>
              <GroupName>{g.name}</GroupName>
            </Group>
          ))}
        </Ribbon>
        <QuickBar>
          <QuickIcons>
            {quick.map((q) => <button key={q} aria-label={q}><Icon name={q} /></button>)}
          </QuickIcons>
          <button aria-label="customize"><Icon name="more" size={8} /></button>
        </QuickBar>
        <Desktop>
          <SummaryReport />
          <PumpPerformance />
        </Desktop>
        <StatusBar>
          {[["Design mode", "Rigorous Design", 135], ["Units", "US Oilfield (API)", 233], ["Case", "Case 1", 134], ["Window", "Summary Report", 385]].map(([label, value, w]) => (
            <Picker key={label} $w={w}>
              <select aria-label={label}><option>{value}</option></select>
              <Caret />
            </Picker>
          ))}
        </StatusBar>
      </Shell>
    </>
  );
}
